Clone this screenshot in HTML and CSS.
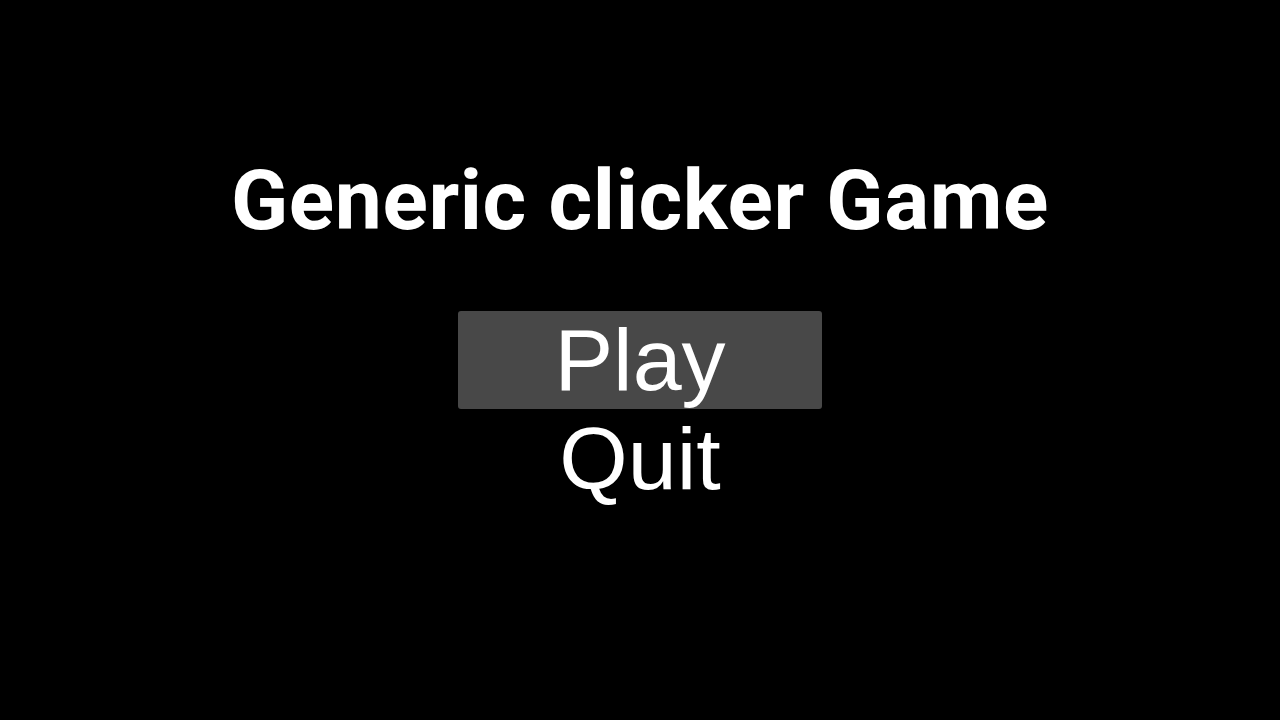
FILE: index.html
```html
<!DOCTYPE html>
<html>
<head>
<meta charset="utf-8">
<link rel="stylesheet" href="styles.css">
</head>
<body>
<main class="menu">
  <h1 class="title">Generic clicker Game</h1>
  <div class="buttons">
    <button class="btn btn-active">Play</button>
    <button class="btn">Quit</button>
  </div>
</main>
</body>
</html>
```
FILE: styles.css
```css
html, body {
  margin: 0;
  padding: 0;
  background: #000;
  width: 1280px;
  height: 720px;
  overflow: hidden;
}
.menu {
  display: flex;
  flex-direction: column;
  align-items: center;
  padding-top: 151px;
}
.title {
  margin: 0;
  font-family: Roboto, "Liberation Sans", sans-serif;
  font-weight: 700;
  font-size: 84px;
  letter-spacing: 0.6px;
  line-height: 100px;
  color: #fff;
}
.buttons {
  display: flex;
  flex-direction: column;
  align-items: center;
  margin-top: 60px;
}
.btn {
  width: 364px;
  height: 98px;
  border: none;
  border-radius: 3px;
  background: transparent;
  color: #fff;
  font-family: "Liberation Sans", Arial, sans-serif;
  font-size: 88px;
  line-height: 98px;
  padding: 0;
}
.btn + .btn {
  margin-top: 1px;
}
.btn-active {
  background: #484848;
}
```
